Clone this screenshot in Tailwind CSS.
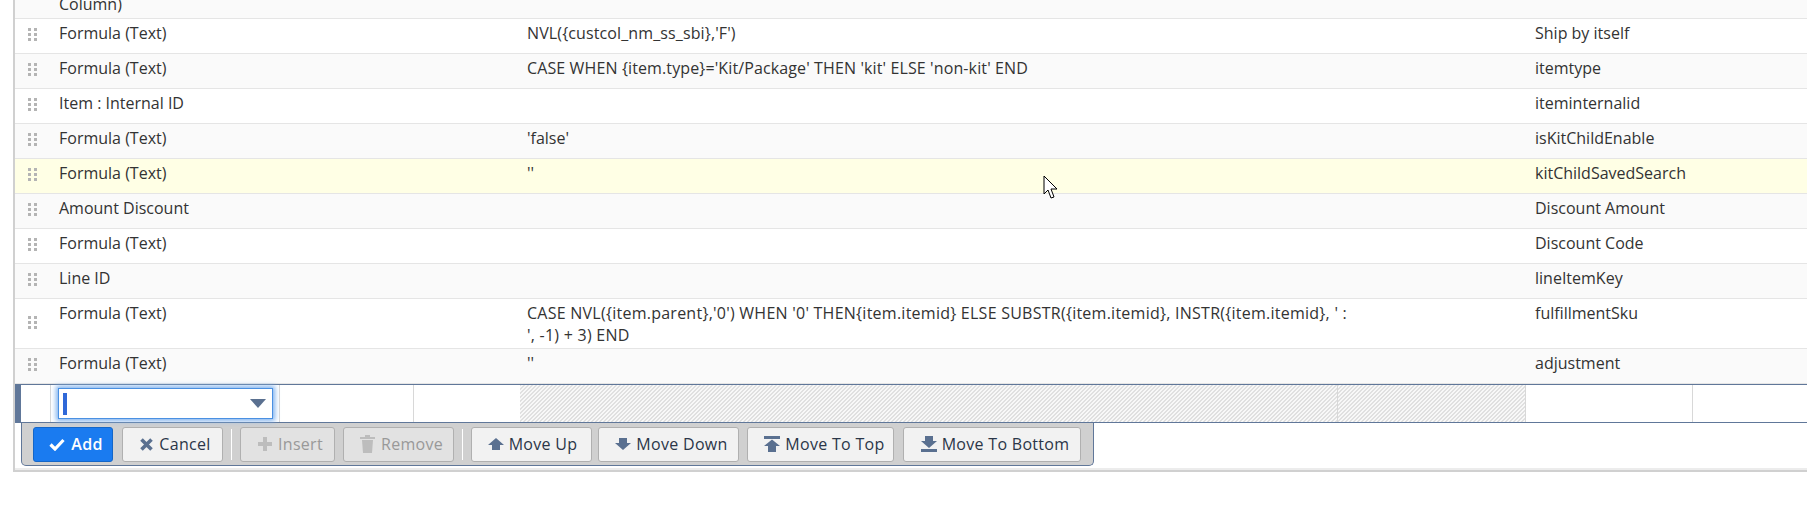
<!DOCTYPE html>
<html lang="en">
<head>
  <meta charset="UTF-8" />
  <title>Results</title>
  <script src="https://cdn.jsdelivr.net/npm/@tailwindcss/browser@4"></script>
</head>
<body class="relative h-[511px] overflow-hidden bg-white font-['Open_Sans',sans-serif] text-[16px] leading-[22px] text-[#333]">
  <div class="ml-[13px] h-[472px] border-l-2 border-b-2 border-[#d0d0d0] shadow-[inset_0_-2px_0_#ececec]">
    <!-- result rows -->
    <div class="h-[19px] overflow-hidden border-b border-[#e5e5e5] bg-[#fafafa] pl-[44px]"><div class="-mt-[7px]">Column)</div></div>

    <div class="flex h-[35px] border-b border-[#e5e5e5] bg-white pt-[3px]">
      <div class="w-[44px] pt-[6px] pl-[13px]"><svg width="10" height="14" fill="#b4b4b4"><rect x="0" y="0" width="3" height="3"/><rect x="6" y="0" width="3" height="3"/><rect x="0" y="5" width="3" height="3"/><rect x="6" y="5" width="3" height="3"/><rect x="0" y="10" width="3" height="3"/><rect x="6" y="10" width="3" height="3"/></svg></div>
      <div class="w-[468px]">Formula (Text)</div>
      <div class="w-[1008px] tracking-[0.12px]">NVL({custcol_nm_ss_sbi},'F')</div>
      <div>Ship by itself</div>
    </div>
    <div class="flex h-[35px] border-b border-[#e5e5e5] bg-[#fafafa] pt-[3px]">
      <div class="w-[44px] pt-[6px] pl-[13px]"><svg width="10" height="14" fill="#b4b4b4"><rect x="0" y="0" width="3" height="3"/><rect x="6" y="0" width="3" height="3"/><rect x="0" y="5" width="3" height="3"/><rect x="6" y="5" width="3" height="3"/><rect x="0" y="10" width="3" height="3"/><rect x="6" y="10" width="3" height="3"/></svg></div>
      <div class="w-[468px]">Formula (Text)</div>
      <div class="w-[1008px] tracking-[0.12px]">CASE WHEN {item.type}='Kit/Package' THEN 'kit' ELSE 'non-kit' END</div>
      <div>itemtype</div>
    </div>
    <div class="flex h-[35px] border-b border-[#e5e5e5] bg-white pt-[3px]">
      <div class="w-[44px] pt-[6px] pl-[13px]"><svg width="10" height="14" fill="#b4b4b4"><rect x="0" y="0" width="3" height="3"/><rect x="6" y="0" width="3" height="3"/><rect x="0" y="5" width="3" height="3"/><rect x="6" y="5" width="3" height="3"/><rect x="0" y="10" width="3" height="3"/><rect x="6" y="10" width="3" height="3"/></svg></div>
      <div class="w-[468px]">Item : Internal ID</div>
      <div class="w-[1008px]"></div>
      <div>iteminternalid</div>
    </div>
    <div class="flex h-[35px] border-b border-[#e5e5e5] bg-[#fafafa] pt-[3px]">
      <div class="w-[44px] pt-[6px] pl-[13px]"><svg width="10" height="14" fill="#b4b4b4"><rect x="0" y="0" width="3" height="3"/><rect x="6" y="0" width="3" height="3"/><rect x="0" y="5" width="3" height="3"/><rect x="6" y="5" width="3" height="3"/><rect x="0" y="10" width="3" height="3"/><rect x="6" y="10" width="3" height="3"/></svg></div>
      <div class="w-[468px]">Formula (Text)</div>
      <div class="w-[1008px]">'false'</div>
      <div>isKitChildEnable</div>
    </div>
    <div class="flex h-[35px] border-b border-[#e5e5e5] bg-[#ffffe5] pt-[3px]">
      <div class="w-[44px] pt-[6px] pl-[13px]"><svg width="10" height="14" fill="#b4b4b4"><rect x="0" y="0" width="3" height="3"/><rect x="6" y="0" width="3" height="3"/><rect x="0" y="5" width="3" height="3"/><rect x="6" y="5" width="3" height="3"/><rect x="0" y="10" width="3" height="3"/><rect x="6" y="10" width="3" height="3"/></svg></div>
      <div class="w-[468px]">Formula (Text)</div>
      <div class="w-[1008px]">''</div>
      <div>kitChildSavedSearch</div>
    </div>
    <div class="flex h-[35px] border-b border-[#e5e5e5] bg-[#fafafa] pt-[3px]">
      <div class="w-[44px] pt-[6px] pl-[13px]"><svg width="10" height="14" fill="#b4b4b4"><rect x="0" y="0" width="3" height="3"/><rect x="6" y="0" width="3" height="3"/><rect x="0" y="5" width="3" height="3"/><rect x="6" y="5" width="3" height="3"/><rect x="0" y="10" width="3" height="3"/><rect x="6" y="10" width="3" height="3"/></svg></div>
      <div class="w-[468px]">Amount Discount</div>
      <div class="w-[1008px]"></div>
      <div>Discount Amount</div>
    </div>
    <div class="flex h-[35px] border-b border-[#e5e5e5] bg-white pt-[3px]">
      <div class="w-[44px] pt-[6px] pl-[13px]"><svg width="10" height="14" fill="#b4b4b4"><rect x="0" y="0" width="3" height="3"/><rect x="6" y="0" width="3" height="3"/><rect x="0" y="5" width="3" height="3"/><rect x="6" y="5" width="3" height="3"/><rect x="0" y="10" width="3" height="3"/><rect x="6" y="10" width="3" height="3"/></svg></div>
      <div class="w-[468px]">Formula (Text)</div>
      <div class="w-[1008px]"></div>
      <div>Discount Code</div>
    </div>
    <div class="flex h-[35px] border-b border-[#e5e5e5] bg-[#fafafa] pt-[3px]">
      <div class="w-[44px] pt-[6px] pl-[13px]"><svg width="10" height="14" fill="#b4b4b4"><rect x="0" y="0" width="3" height="3"/><rect x="6" y="0" width="3" height="3"/><rect x="0" y="5" width="3" height="3"/><rect x="6" y="5" width="3" height="3"/><rect x="0" y="10" width="3" height="3"/><rect x="6" y="10" width="3" height="3"/></svg></div>
      <div class="w-[468px]">Line ID</div>
      <div class="w-[1008px]"></div>
      <div>lineItemKey</div>
    </div>
    <div class="flex h-[50px] border-b border-[#e5e5e5] bg-white pt-[3px]">
      <div class="w-[44px] pt-[14px] pl-[13px]"><svg width="10" height="14" fill="#b4b4b4"><rect x="0" y="0" width="3" height="3"/><rect x="6" y="0" width="3" height="3"/><rect x="0" y="5" width="3" height="3"/><rect x="6" y="5" width="3" height="3"/><rect x="0" y="10" width="3" height="3"/><rect x="6" y="10" width="3" height="3"/></svg></div>
      <div class="w-[468px]">Formula (Text)</div>
      <div class="w-[1008px] tracking-[0.25px]">CASE NVL({item.parent},'0') WHEN '0' THEN{item.itemid} ELSE SUBSTR({item.itemid}, INSTR({item.itemid}, ' :<br>', -1) + 3) END</div>
      <div>fulfillmentSku</div>
    </div>
    <div class="flex h-[35px] border-b border-[#e5e5e5] bg-[#fafafa] pt-[3px]">
      <div class="w-[44px] pt-[6px] pl-[13px]"><svg width="10" height="14" fill="#b4b4b4"><rect x="0" y="0" width="3" height="3"/><rect x="6" y="0" width="3" height="3"/><rect x="0" y="5" width="3" height="3"/><rect x="6" y="5" width="3" height="3"/><rect x="0" y="10" width="3" height="3"/><rect x="6" y="10" width="3" height="3"/></svg></div>
      <div class="w-[468px]">Formula (Text)</div>
      <div class="w-[1008px]">''</div>
      <div>adjustment</div>
    </div>

    <!-- edit row -->
    <div class="flex h-[39px] border-y border-[#607799] bg-white">
      <div class="w-[6px] bg-[#607799]"></div>
      <div class="w-[30px] border-r border-[#d8d8d8]"></div>
      <div class="w-[229px] border-r border-[#d8d8d8] pl-[7px] pt-[3px]">
        <div class="flex h-[31px] w-[215px] items-center justify-between border border-[#4a90e2] pl-[4px] pr-[6px] shadow-[0_0_5px_2px_#7fb2ee]">
          <div class="h-[22px] w-[4px] bg-[#2f68d8]"></div>
          <svg width="16" height="9" fill="#5a7090"><path d="M0 0H16L8 9Z"/></svg>
        </div>
      </div>
      <div class="w-[134px] border-r border-[#d8d8d8]"></div>
      <div class="w-[106px]"></div>
      <div class="w-[818px] border-r border-[#d8d8d8] bg-[repeating-linear-gradient(135deg,#e0e0e0_0,#e0e0e0_0.8px,#f8f8f8_0.8px,#f8f8f8_2.8284px)]"></div>
      <div class="w-[188px] border-r border-[#d8d8d8] bg-[repeating-linear-gradient(135deg,#e0e0e0_0,#e0e0e0_0.8px,#f8f8f8_0.8px,#f8f8f8_2.8284px)]"></div>
      <div class="w-[167px] border-r border-[#d8d8d8]"></div>
    </div>

    <!-- machine buttons -->
    <div class="ml-[6px] flex h-[43px] w-[1073px] items-center rounded-b-[5px] border border-t-0 border-[#607799] bg-[#d0d0d0] pl-[11px] tracking-[0.3px] text-[#2b3648]">
      <button class="flex h-[35px] w-[80px] items-center justify-center gap-[6px] rounded-[3px] border border-[#1466c8] bg-[#1a7bf0] pl-[6px] font-semibold text-white">
        <svg width="16" height="13" fill="none" stroke="#fff" stroke-width="3.2"><path d="M1.5 6.5L6 11L14.5 2"/></svg>Add
      </button>
      <button class="ml-[9px] flex h-[35px] w-[101px] items-center justify-center gap-[6px] rounded-[3px] border border-[#b0b0b0] bg-[#f2f2f2] pl-[6px]">
        <svg width="13" height="13" fill="none" stroke="#5a7090" stroke-width="3.6"><path d="M1.5 1.5L11.5 11.5M11.5 1.5L1.5 11.5"/></svg>Cancel
      </button>
      <div class="mx-[8px] h-[31px] w-px bg-white"></div>
      <button class="flex h-[35px] w-[95px] items-center justify-center gap-[6px] rounded-[3px] border border-[#b0b0b0] bg-[#e2e2e2] pl-[6px] text-[#999]">
        <svg width="14" height="14" fill="#bdbdbd"><path d="M5 0H9V5H14V9H9V14H5V9H0V5H5Z"/></svg>Insert
      </button>
      <button class="ml-[8px] flex h-[35px] w-[111px] items-center justify-center gap-[6px] rounded-[3px] border border-[#b0b0b0] bg-[#e2e2e2] pl-[6px] text-[#999]">
        <svg width="15" height="18" fill="#bdbdbd"><path d="M0 2H5V0H10V2H15V4H0ZM2 5H13L12 18H3Z"/></svg>Remove
      </button>
      <div class="mx-[8px] h-[31px] w-px bg-white"></div>
      <button class="flex h-[35px] w-[121px] items-center justify-center gap-[5px] rounded-[3px] border border-[#b0b0b0] bg-[#f2f2f2] pl-[2px]">
        <svg width="16" height="12" fill="#5a7090"><path d="M8 0L16 7H12V12H4V7H0Z"/></svg>Move Up
      </button>
      <button class="ml-[6px] flex h-[35px] w-[141px] items-center justify-center gap-[5px] rounded-[3px] border border-[#b0b0b0] bg-[#f2f2f2] pl-[6px]">
        <svg width="16" height="12" fill="#5a7090"><path d="M4 0H12V5H16L8 12L0 5H4Z"/></svg>Move Down
      </button>
      <button class="ml-[8px] flex h-[35px] w-[147px] items-center justify-center gap-[5px] rounded-[3px] border border-[#b0b0b0] bg-[#f2f2f2] pl-[8px]">
        <svg width="16" height="16" fill="#5a7090"><path d="M0 0H16V3H0ZM8 3.5L16 10H12V16H4V10H0Z"/></svg>Move To Top
      </button>
      <button class="ml-[9px] flex h-[35px] w-[178px] items-center justify-center gap-[5px] rounded-[3px] border border-[#b0b0b0] bg-[#f2f2f2] pl-[6px]">
        <svg width="16" height="16" fill="#5a7090"><path d="M4 0H12V5H16L8 12L0 5H4ZM0 13H16V16H0Z"/></svg>Move To Bottom
      </button>
    </div>
  </div>

  <!-- mouse pointer over the grid -->
  <svg class="absolute left-[1043px] top-[175px]" width="16" height="26" viewBox="0 0 16 26" fill="#fff" stroke="#000" stroke-width="1"><path d="M1 1V19L5 15L8 23L11 22L8 14H14Z"/></svg>
</body>
</html>
